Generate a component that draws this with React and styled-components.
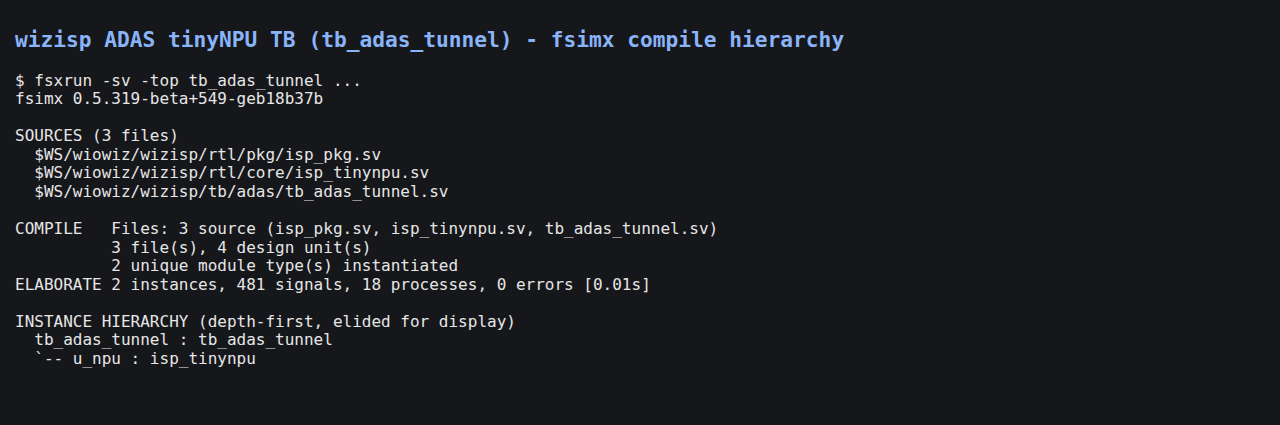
import React from 'react';
import styled, { createGlobalStyle } from 'styled-components';

const Global = createGlobalStyle`
  html, body {
    margin: 0;
    padding: 0;
    background: #16171b;
  }
`;

const Page = styled.div`
  min-height: 425px;
  background: #16171b;
  padding: 28px 15px 0 15px;
  box-sizing: border-box;
  font-family: "DejaVu Sans Mono", "Liberation Mono", monospace;
`;

const Title = styled.h1`
  margin: 0 0 19.5px 0;
  font-size: 21.2px;
  font-weight: bold;
  line-height: 24px;
  color: #8ab4f8;
`;

const Output = styled.pre`
  margin: 0;
  font-family: inherit;
  font-size: 16px;
  line-height: 18.57px;
  color: #e6e6e6;
  white-space: pre;
`;

const log = [
  '$ fsxrun -sv -top tb_adas_tunnel ...',
  'fsimx 0.5.319-beta+549-geb18b37b',
  '',
  'SOURCES (3 files)',
  '  $WS/wiowiz/wizisp/rtl/pkg/isp_pkg.sv',
  '  $WS/wiowiz/wizisp/rtl/core/isp_tinynpu.sv',
  '  $WS/wiowiz/wizisp/tb/adas/tb_adas_tunnel.sv',
  '',
  'COMPILE   Files: 3 source (isp_pkg.sv, isp_tinynpu.sv, tb_adas_tunnel.sv)',
  '          3 file(s), 4 design unit(s)',
  '          2 unique module type(s) instantiated',
  'ELABORATE 2 instances, 481 signals, 18 processes, 0 errors [0.01s]',
  '',
  'INSTANCE HIERARCHY (depth-first, elided for display)',
  '  tb_adas_tunnel : tb_adas_tunnel',
  '  `-- u_npu : isp_tinynpu',
].join('\n');

export default function App() {
  return (
    <>
      <Global />
      <Page>
        <Title>wizisp ADAS tinyNPU TB (tb_adas_tunnel) - fsimx compile hierarchy</Title>
        <Output>{log}</Output>
      </Page>
    </>
  );
}
